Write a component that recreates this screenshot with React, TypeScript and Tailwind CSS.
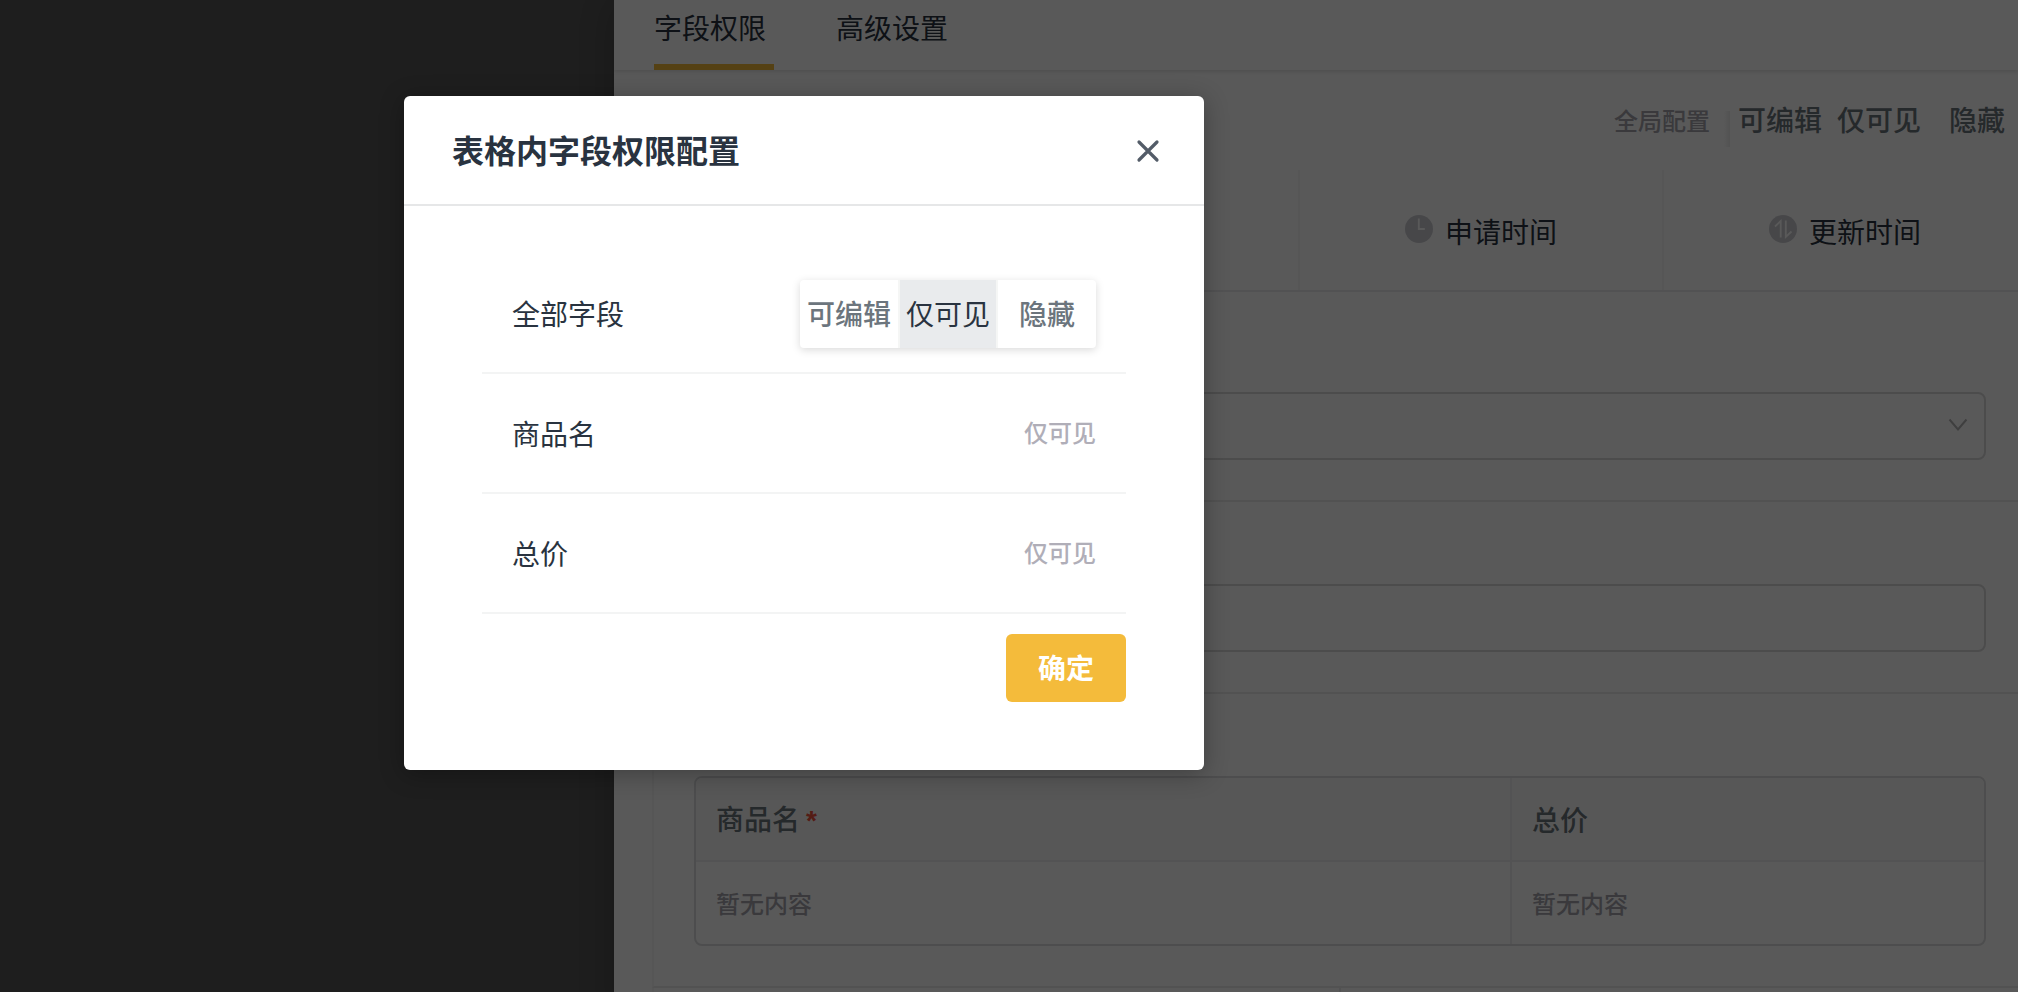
import React from "react";

type Access = "可编辑" | "仅可见" | "隐藏";
const ACCESS: Access[] = ["可编辑", "仅可见", "隐藏"];

function AccessSwitch({ active, label }: { active?: Access; label: string }) {
  return (
    <div
      role="group"
      aria-label={label}
      className="grid h-[68px] shrink-0 grid-cols-[100px_98px_98px] divide-x-2 divide-[#f5f6f5] overflow-hidden rounded bg-white shadow-[0_2px_8px_rgba(0,0,0,0.15)]"
    >
      {ACCESS.map((item) => (
        <button
          key={item}
          type="button"
          aria-pressed={item === active}
          className={
            item === active
              ? "whitespace-nowrap bg-[#e9ebed] pb-0.5 text-[#293340]"
              : "whitespace-nowrap pb-0.5 font-medium text-[#6c757d]"
          }
        >
          {item}
        </button>
      ))}
    </div>
  );
}

function ClockIcon() {
  return (
    <svg viewBox="0 0 28 28" className="mb-1.5 size-7 shrink-0" aria-hidden="true">
      <circle cx="14" cy="14" r="14" fill="#cbccd2" />
      <path d="M13.8 3.500v10.500h6" fill="none" stroke="#fff" strokeWidth="1.8" />
    </svg>
  );
}

function UpdateIcon() {
  return (
    <svg viewBox="0 0 28 28" className="mb-1.5 size-7 shrink-0" aria-hidden="true">
      <circle cx="14" cy="14" r="14" fill="#cbccd2" />
      <path
        d="M6 11.5 L11.7 6 V22.5 M16.8 5.5 V22 L22.5 16.5"
        fill="none"
        stroke="#fff"
        strokeWidth="1.8"
      />
    </svg>
  );
}

function MetaCell({ icon, text }: { icon: React.ReactNode; text: string }) {
  return (
    <div className="flex w-[364px] shrink-0 items-center justify-center gap-3 border-l-2 border-[#f5f5f6] pt-1">
      {icon}
      <span className="pb-0.5 text-[#293340]">{text}</span>
    </div>
  );
}

function FieldSection({ children }: { children: React.ReactNode }) {
  return (
    <section className="border-b-2 border-l-2 border-b-[#ebebec] border-l-[#f5f5f6] pt-[82px] pr-8 pb-10 pl-10">
      {children}
    </section>
  );
}

function PermissionRow({ name, children }: { name: string; children: React.ReactNode }) {
  return (
    <li className="flex h-[120px] items-center justify-between border-b-2 border-[#f3f4f4] px-[30px] pt-0.5">
      <span className="pb-0.5 text-[#293340]">{name}</span>
      {children}
    </li>
  );
}

export default function App() {
  return (
    <div className="relative h-screen overflow-hidden bg-[#575757] font-['Noto_Sans_CJK_SC',sans-serif] text-[28px] leading-10">
      <main className="ml-[614px] min-h-full overflow-hidden bg-white shadow-[0_0_40px_rgba(0,0,0,0.25)]">
        <nav className="flex h-[70px] gap-[62px] pl-10 shadow-[0_2px_4px_rgba(0,0,0,0.12)]">
          <button
            type="button"
            className="w-[120px] border-b-[6px] border-[#f4bb3b] pb-2.5 text-left text-[#293340]"
          >
            字段权限
          </button>
          <button
            type="button"
            className="w-[120px] border-b-[6px] border-transparent pb-2.5 text-left text-[#293340]"
          >
            高级设置
          </button>
        </nav>

        <div className="-mr-2 flex h-[100px] items-center justify-end pb-0.5">
          <span className="pt-0.5 text-2xl font-medium text-[#a5a3ad]">全局配置</span>
          <div className="mt-5 ml-3.5 h-9 w-1.5 shrink-0 bg-linear-to-r from-transparent to-[#ececec]" />
          <div
            role="group"
            aria-label="全局配置"
            className="grid shrink-0 grid-cols-[100px_98px_98px] font-medium text-[#6c757d]"
          >
            {ACCESS.map((item) => (
              <button key={item} type="button" className="whitespace-nowrap">
                {item}
              </button>
            ))}
          </div>
        </div>

        <div className="-mr-2 flex h-[122px] justify-end border-b-2 border-[#ececed]">
          <MetaCell icon={<ClockIcon />} text="申请时间" />
          <MetaCell icon={<UpdateIcon />} text="更新时间" />
        </div>

        <div className="pt-[18px] pl-[38px]">
          <FieldSection>
            <div className="relative">
              <select
                aria-label="选择"
                className="block h-[68px] w-full appearance-none rounded-lg border-2 border-[#d9d9db] bg-white px-5"
              />
              <svg
                viewBox="0 0 20 14"
                className="pointer-events-none absolute top-[26px] right-[18px] h-3.5 w-5"
                fill="none"
                stroke="#b4b4b6"
                strokeWidth="2"
                aria-hidden="true"
              >
                <path d="M1.5 1.5 10 11.5 18.500 1.5" />
              </svg>
            </div>
          </FieldSection>
          <FieldSection>
            <input
              type="text"
              aria-label="输入"
              className="block h-[68px] w-full rounded-lg border-2 border-[#d9d9db] bg-white px-5"
            />
          </FieldSection>
          <FieldSection>
            <div className="overflow-hidden rounded-lg border-2 border-[#dcdddf]">
              <table className="w-full table-fixed border-separate border-spacing-0 text-left">
                <colgroup>
                  <col />
                  <col className="w-[474px]" />
                </colgroup>
                <thead>
                  <tr className="h-[84px] bg-[#fafafa] text-[#6c757d]">
                    <th className="border-b-2 border-[#eeeeef] px-5 font-medium">
                      商品名
                      <span className="ml-1.5 font-['Liberation_Sans',sans-serif] font-bold text-[#f0503c]">
                        *
                      </span>
                    </th>
                    <th className="border-b-2 border-l-2 border-[#eeeeef] px-5 font-medium">总价</th>
                  </tr>
                </thead>
                <tbody>
                  <tr className="h-[82px] text-2xl font-medium text-[#a5a3ad]">
                    <td className="px-5">暂无内容</td>
                    <td className="border-l-2 border-[#eeeeef] px-5">暂无内容</td>
                  </tr>
                </tbody>
              </table>
            </div>
          </FieldSection>
          <div className="-mr-2 grid h-10 grid-cols-2">
            <div className="border-l-2 border-[#f5f5f6]" />
            <div className="border-l-2 border-[#ececed]" />
          </div>
        </div>
      </main>

      <div className="absolute inset-0 flex items-start bg-black/65 pt-24 pl-[404px]">
        <div
          role="dialog"
          aria-labelledby="dialog-title"
          className="w-[800px] rounded-md bg-white shadow-[0_4px_24px_rgba(0,0,0,0.3)]"
        >
          <header className="flex h-[110px] items-center justify-between border-b-2 border-[#e6e7e8] pr-[46px] pl-12">
            <h2 id="dialog-title" className="pb-0.5 text-[32px] font-bold text-[#293340]">
              表格内字段权限配置
            </h2>
            <button type="button" aria-label="关闭">
              <svg
                viewBox="0 0 20 20"
                className="mt-0.5 size-5 overflow-visible"
                fill="none"
                stroke="#535c68"
                strokeWidth="3.2"
                strokeLinecap="round"
                aria-hidden="true"
              >
                <path d="M1 1 19 19M19 1 1 19" />
              </svg>
            </button>
          </header>
          <div className="px-[78px] pt-12 pb-[68px]">
            <ul>
              <PermissionRow name="全部字段">
                <AccessSwitch active="仅可见" label="全部字段" />
              </PermissionRow>
              <PermissionRow name="商品名">
                <span className="pb-1 text-2xl font-medium text-[#b0aeb8]">仅可见</span>
              </PermissionRow>
              <PermissionRow name="总价">
                <span className="pb-1 text-2xl font-medium text-[#b0aeb8]">仅可见</span>
              </PermissionRow>
            </ul>
            <div className="mt-5 flex justify-end">
              <button
                type="button"
                className="h-[68px] w-[120px] rounded-md bg-[#f4bb3b] pb-0.5 font-bold text-white"
              >
                确定
              </button>
            </div>
          </div>
        </div>
      </div>
    </div>
  );
}
